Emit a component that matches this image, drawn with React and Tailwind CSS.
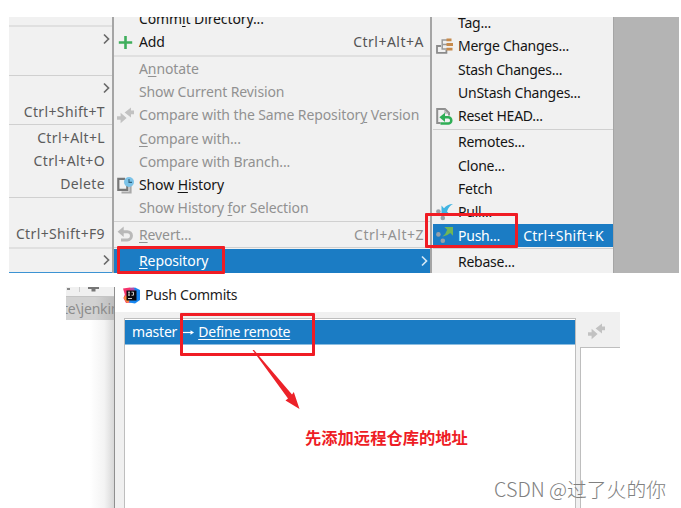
import React from "react";
import clsx from "clsx";

const editRows = [
  { type: "sep", thick: true },
  { arrow: true },
  {},
  { type: "sep" },
  { arrow: true },
  { keys: "Ctrl+Shift+T" },
  { type: "sep" },
  { keys: "Ctrl+Alt+L" },
  { keys: "Ctrl+Alt+O" },
  { keys: "Delete" },
  { type: "sep" },
  {},
  { keys: "Ctrl+Shift+F9" },
  { type: "sep", thick: true },
  { arrow: true },
];

const gitRows = [
  { label: ["Comm", "i", "t Directory..."] },
  { label: ["Add"], keys: "Ctrl+Alt+A", icon: "add" },
  { type: "sep", thick: true },
  { label: ["A", "n", "notate"], disabled: true },
  { label: ["Show Current Revision"], disabled: true },
  {
    label: ["Compare with the Same Repositor", "y", " Version"],
    disabled: true,
    icon: "compare",
  },
  { label: ["", "C", "ompare with..."], disabled: true },
  { label: ["Compare with Branch..."], disabled: true },
  { label: ["Show ", "H", "istory"], icon: "history" },
  { label: ["Show History ", "f", "or Selection"], disabled: true },
  { type: "sep" },
  { label: ["", "R", "evert..."], keys: "Ctrl+Alt+Z", disabled: true, icon: "revert" },
  { type: "sep" },
  { label: ["", "R", "epository"], active: true, arrow: true },
];

const repositoryRows = [
  { label: ["Tag..."] },
  { label: ["Merge Changes..."], icon: "merge" },
  { label: ["Stash Changes..."] },
  { label: ["UnStash Changes..."] },
  { label: ["Reset HEAD..."], icon: "reset" },
  { type: "sep" },
  { label: ["Remotes..."] },
  { label: ["Clone..."] },
  { label: ["Fetch"] },
  { label: ["Pull..."], icon: "pull" },
  { label: ["Push..."], keys: "Ctrl+Shift+K", icon: "push", active: true },
  { type: "sep" },
  { label: ["Rebase..."] },
];

function CompareIcon() {
  return (
    <svg width="17" height="17" viewBox="0 0 17 17" fill="#c2c2c2">
      <path d="M0 9.2h3.6V5.8L9.6 11 3.6 16.2v-3.4H0z" />
      <path d="M17 3.6h-3V.4L7.6 5.4l6.4 5.2V7.2h3z" />
    </svg>
  );
}

function Icon({ name }) {
  switch (name) {
    case "add":
      return (
        <svg width="17" height="17" viewBox="0 0 17 17">
          <path d="M8.5 2v13M1.8 8.5h13.4" stroke="#3fae5c" strokeWidth="2.6" />
        </svg>
      );
    case "compare":
      return <CompareIcon />;
    case "history":
      return (
        <svg width="17" height="17" viewBox="0 0 17 17">
          <path d="M4.5 15.5h9V9" fill="none" stroke="#a9a9a9" strokeWidth="2.2" />
          <path d="M8 1.8H1.3v11h9V9" fill="none" stroke="#777" strokeWidth="2.2" />
          <circle cx="12" cy="5" r="5" fill="#7cc3e8" />
          <path d="M12 2v3.4h3" fill="none" stroke="#31617c" strokeWidth="1.1" />
        </svg>
      );
    case "revert":
      return (
        <svg width="17" height="17" viewBox="0 0 17 17">
          <path d="M5 5.7h5.3a4 4 0 0 1 0 8.3H4" fill="none" stroke="#b9b9b9" strokeWidth="3" />
          <path d="M.6 5.7 6.7.4v10.6z" fill="#b9b9b9" />
        </svg>
      );
    case "merge":
      return (
        <svg width="17" height="17" viewBox="0 0 17 17" fill="none">
          <path d="M5 8H1v6.8h9.4V12" stroke="#8b8b8b" strokeWidth="1.8" />
          <path d="M11 2H6.2v9H11M6.2 6.5H11" stroke="#999" strokeWidth="1.5" />
          <path d="M10.5 1.8H15.5M10.5 6.5H17M10.5 11.2H16.5" stroke="#c68a4c" strokeWidth="2.8" />
        </svg>
      );
    case "reset":
      return (
        <svg width="17" height="17" viewBox="0 0 17 17" fill="none">
          <path d="M4.5 15H1.2V1H9l4 4v2.5" stroke="#8f8f8f" strokeWidth="2" />
          <path d="M9 1v4h4" stroke="#9f9f9f" />
          <path d="M7 9.3h5.2a3 3 0 0 1 0 6.2H4.5" stroke="#2fae55" strokeWidth="2.5" />
          <path d="M3.4 9.3 9 4.7v9.2z" fill="#2fae55" />
        </svg>
      );
    case "pull":
      return (
        <svg width="17" height="17" viewBox="0 0 17 17">
          <circle cx="2.4" cy="7.6" r="2.3" fill="#98a1a8" />
          <circle cx="6.8" cy="14" r="2.3" fill="#98a1a8" />
          <path d="M5.5 1.6 8 4.2Q11 .2 17 0 12.6 2.4 11 7.4L14 10.4H5.5z" fill="#40b4e2" />
        </svg>
      );
    case "push":
      return (
        <svg width="17" height="17" viewBox="0 0 17 17">
          <circle cx="2.4" cy="7.4" r="2.3" fill="#98a1a8" />
          <circle cx="6.8" cy="13.8" r="2.3" fill="#98a1a8" />
          <path d="M8.4 0H17v8.8l-2.8-2.8Q11.4 9 6.2 9.8 10 7 11.2 2.8z" fill="#6fb658" />
        </svg>
      );
    default:
      return null;
  }
}

function Chevron({ light }) {
  return (
    <svg width="7" height="12" viewBox="0 0 7 12" fill="none" className="shrink-0">
      <path d="M1 1.5 5.5 6 1 10.5" stroke={light ? "#d4e7f5" : "#6a6a6a"} strokeWidth="1.7" />
    </svg>
  );
}

function Separator({ thick }) {
  return (
    <div className="h-[3px] shrink-0 pt-px">
      <div className={thick ? "h-[2px] bg-[#e0e0e0]" : "h-px bg-[#d0d0d0]"} />
    </div>
  );
}

function MenuRow({ row, tight }) {
  if (row.type === "sep") return <Separator thick={row.thick} />;

  return (
    <div
      className={clsx(
        "flex h-[23.3px] shrink-0 items-center whitespace-nowrap pl-[3px]",
        row.arrow ? "pr-[2px]" : row.active ? "pr-[9px]" : "pr-[6px]",
        row.active && "bg-[#1b7cc4] text-white",
        row.disabled && "text-[#919191]",
        !row.active && !row.disabled && "text-[#151515]"
      )}
    >
      <div className="mr-[5px] w-[17px] shrink-0">
        <Icon name={row.icon} />
      </div>
      <span className={tight ? "tracking-[-0.24px]" : "tracking-[-0.11px]"}>
        {row.label[0]}
        {row.label[1] && (
          <span className="underline decoration-1 underline-offset-2">{row.label[1]}</span>
        )}
        {row.label[2]}
      </span>
      {row.keys && (
        <span
          className={clsx(
            "ml-auto",
            row.active ? "tracking-[0.25px]" : "tracking-[0.5px]",
            !row.active && !row.disabled && "text-[#555]"
          )}
        >
          {row.keys}
        </span>
      )}
      {row.arrow && (
        <span className="ml-auto">
          <Chevron light />
        </span>
      )}
    </div>
  );
}

function Menus() {
  return (
    <div className="relative ml-[9px] h-[256px] w-[670px]">
      <div className="flex h-full overflow-hidden bg-[#b4b4b4]">
        {/* EDIT MENU */}
        <div className="flex w-[103px] flex-col border-b border-[#3c93d3] bg-[#f1f1f1] pt-[7px]">
          {editRows.map((row, index) =>
            row.type === "sep" ? (
              <Separator key={index} thick={row.thick} />
            ) : (
              <div
                key={index}
                className={clsx(
                  "flex h-[23.3px] shrink-0 items-center justify-end tracking-[0.36px] text-[#5c5c5c]",
                  row.arrow ? "pr-[2px]" : "pr-[7px]"
                )}
              >
                {row.keys}
                {row.arrow && <Chevron />}
              </div>
            )
          )}
        </div>

        {/* GIT MENU */}
        <div className="w-[320px] border-x-2 border-[#a5a5a5] bg-[#f1f1f1]">
          <div className="-mt-[9.6px] flex flex-col">
            {gitRows.map((row, index) => (
              <MenuRow key={index} row={row} />
            ))}
          </div>
        </div>

        {/* REPOSITORY MENU */}
        <div className="w-[182px] border-r border-[#a5a5a5] bg-[#f1f1f1] pl-px">
          <div className="-mt-[5.7px] flex flex-col">
            {repositoryRows.map((row, index) => (
              <MenuRow key={index} row={row} tight />
            ))}
          </div>
        </div>
      </div>

      {/* HIGHLIGHTS */}
      <div className="absolute left-[108px] top-[229px] h-[28px] w-[108px] rounded-[1px] border-3 border-[#f01c24]" />
      <div className="absolute left-[416px] top-[196px] h-[35px] w-[93px] rounded-[1px] border-3 border-[#f01c24]" />
    </div>
  );
}

function IdeaLogo() {
  return (
    <svg width="17" height="17" viewBox="0 0 17 17">
      <path d="M0 1.5 7 .5l3 3-2 12-5 .5L.5 11l1.3-3.5z" fill="#f5336b" />
      <path d="M.5 11 3 8l4 6-3 2z" fill="#fb8a3c" />
      <path d="M9 1.5 12 .5 17 3v10l-5 3.5-6-1z" fill="#1687f2" />
      <path d="M7 .8 11 .6 12 4H8z" fill="#b04ca8" />
      <rect x="3.5" y="3.5" width="10" height="10" fill="#0b0b0f" />
      <path d="M5 5.2h2M6 5.2v3M5 8.2h2M8.5 5.2h2v3h-2M5 11.5h4" stroke="#ddd" strokeWidth=".9" fill="none" />
    </svg>
  );
}

function PushDialog() {
  return (
    <div className="relative ml-[66px] mt-[14px] flex h-[221px] w-[554px]">
      {/* EDITOR BEHIND THE DIALOG */}
      <div className="flex w-[48px] flex-col overflow-hidden">
        <div className="flex h-[5px] shrink-0 items-start bg-[#f0f0f0]">
          <span className="ml-px mt-px h-[2px] w-[3px] bg-[#888]" />
          <span className="ml-[9px] h-full w-px bg-[#ccc]" />
          <svg width="11" height="5" viewBox="0 0 11 5" className="ml-[8px]">
            <path d="M0 0h11v2H7.5v2.5h-4V2H0z" fill="#777" />
          </svg>
        </div>
        <div className="h-[5px] shrink-0 border-b border-[#c4c4c4] bg-[#f0f0f0]" />
        <div className="flex h-[23px] shrink-0 whitespace-nowrap bg-linear-to-r from-[#d2d2d2] from-60% to-[#bdbdbd] leading-[23px] tracking-[-0.2px] text-[#8c8c8c]">
          <span className="-ml-[3px]">te\jenkins</span>
        </div>
        <div className="flex-1 bg-linear-to-r from-white from-50% via-[#f3f3f3] via-80% to-[#d8d8d8]" />
      </div>

      <div className="flex flex-1 flex-col border-l border-[#8f8f8f] bg-[#f0f0f0]">
        <div className="flex h-[25px] shrink-0 items-center bg-white pl-[8px] pb-[9px] text-[#1c1c1c]">
          <IdeaLogo />
          <span className="ml-[5px] tracking-[-0.22px]">Push Commits</span>
        </div>
        <div className="flex flex-1 pl-[9px] pt-[6px]">
          <div className="w-[452px] border-x border-t border-[#bebebe] bg-white pt-px">
            <div className="flex h-[25px] items-center whitespace-nowrap border-b border-[#8cbde0] bg-[#1b7cc4] pl-[7px] tracking-[-0.2px] text-white">
              master
              <svg width="11" height="7" viewBox="0 0 11 7" className="ml-[6px] mr-[4px]">
                <path d="M0 3.5h9" stroke="#fff" strokeWidth="1.2" />
                <path d="M7.5 1.2 11 3.5 7.5 5.8z" fill="#fff" />
              </svg>
              <span className="underline decoration-1 underline-offset-2">Define remote</span>
            </div>
          </div>
          <div className="ml-[4px] flex flex-1 flex-col">
            <div className="flex h-[29px] items-center pb-[3px] pl-[8px]">
              <CompareIcon />
            </div>
            <div className="flex-1 border-l border-t border-[#bebebe] bg-white" />
          </div>
        </div>
      </div>

      {/* ANNOTATIONS */}
      <div className="absolute left-[114px] top-[26px] h-[43px] w-[135px] rounded-[1px] border-3 border-[#f01c24]" />
      <svg width="50" height="62" viewBox="0 0 50 62" className="absolute left-[185px] top-[62px]">
        <path d="M1.5 1 3 1 41 45.5 42.8 43 48.5 60 34.5 51.5 37 49.5z" fill="#ec2229" />
      </svg>
      <div className="absolute left-[239px] top-[138px] whitespace-nowrap font-['Noto_Sans_CJK_SC',sans-serif] text-[16.3px] font-bold leading-[24px] text-[#ee1c25]">
        先添加远程仓库的地址
      </div>
    </div>
  );
}

export default function App() {
  return (
    <div className="relative h-[508px] w-[681px] overflow-hidden bg-white pt-[17px] font-['Noto_Sans',sans-serif] text-[14px] leading-[20px]">
      <Menus />
      <PushDialog />
      <div className="absolute left-[494px] top-[475px] whitespace-nowrap font-['Noto_Sans_CJK_SC',sans-serif] text-[19.8px] font-light leading-[28px] text-[#808080]">
        CSDN @过了火的你
      </div>
    </div>
  );
}
